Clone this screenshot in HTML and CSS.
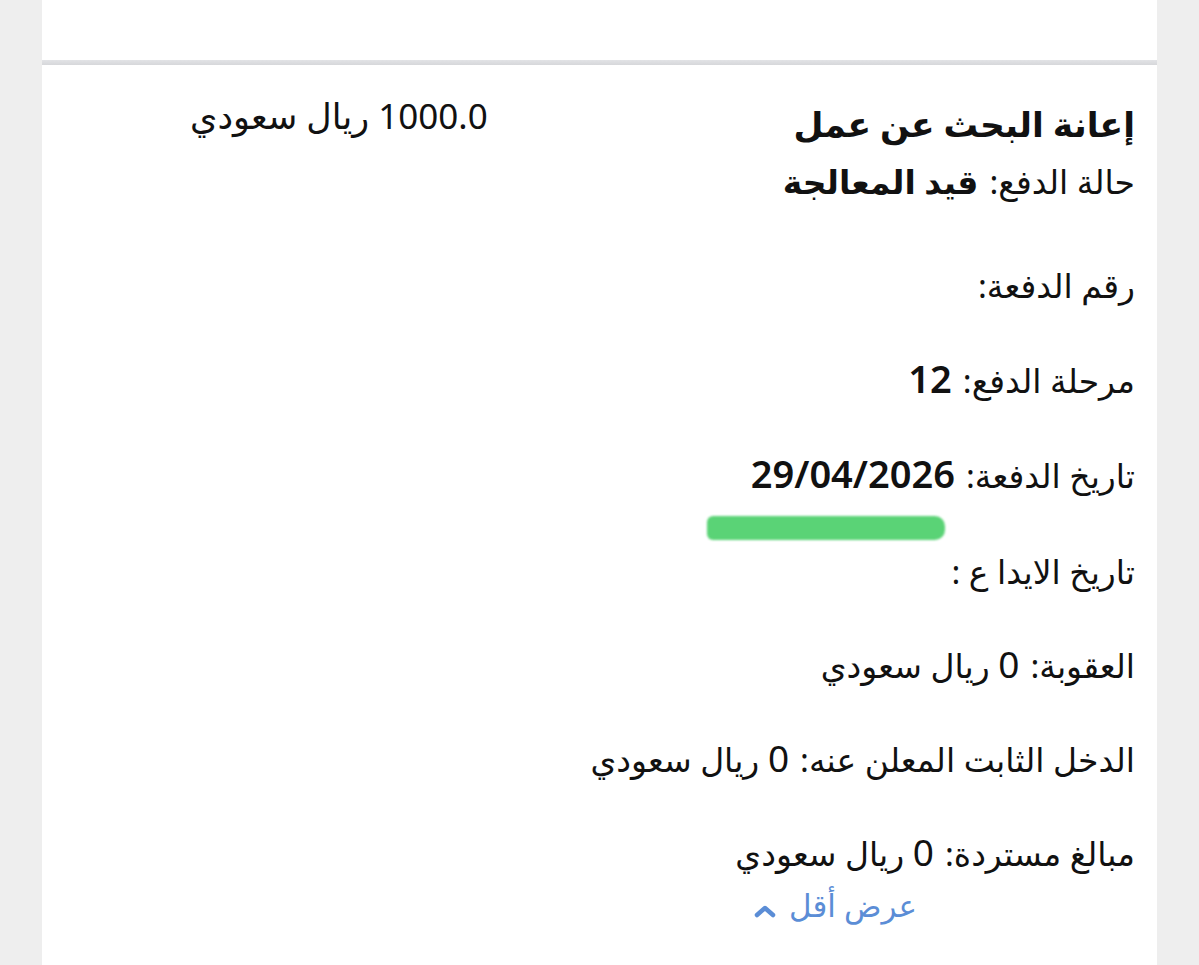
FILE: index.html
```html
<!DOCTYPE html>
<html lang="ar" dir="rtl">
<head>
<meta charset="utf-8">
<link rel="stylesheet" href="styles.css">
</head>
<body>
<div class="card">
  <div class="top-space"></div>
  <div class="divider"></div>
  <div class="content">
    <div class="head">
      <div class="title">إعانة البحث عن عمل</div>
      <div class="amount">1000.0 ريال سعودي</div>
    </div>
    <div class="row status"><span class="label">حالة الدفع:</span><b class="val">قيد المعالجة</b></div>
    <div class="rows">
      <div class="row"><span class="label">رقم الدفعة:</span></div>
      <div class="row"><span class="label">مرحلة الدفع:</span><b class="num val">12</b></div>
      <div class="row date"><span class="label">تاريخ الدفعة:</span><b class="num val">29/04/2026</b><span class="marker"></span></div>
      <div class="row deposit"><span class="label">تاريخ الايدا ع :</span></div>
      <div class="row"><span class="label">العقوبة:</span><span class="num val">0</span> ريال سعودي</div>
      <div class="row"><span class="label">الدخل الثابت المعلن عنه:</span><span class="num val">0</span> ريال سعودي</div>
      <div class="row"><span class="label">مبالغ مستردة:</span><span class="num val">0</span> ريال سعودي</div>
    </div>
    <div class="less">
      <span class="less-text">عرض أقل</span>
      <svg class="chev" width="24" height="14" viewBox="0 0 24 14"><path d="M4 11 L12 4 L20 11" fill="none" stroke="#5b8dd6" stroke-width="4.5" stroke-linecap="round" stroke-linejoin="round"/></svg>
    </div>
  </div>
</div>
</body>
</html>
```
FILE: styles.css
```css
html, body {
  margin: 0;
  padding: 0;
  background: #eeeeee;
}
body {
  font-family: "Noto Sans", "DejaVu Sans", sans-serif;
  color: #111;
}
.card {
  margin: 0 42px;
  background: #fff;
  min-height: 965px;
}
.top-space {
  height: 60px;
}
.divider {
  height: 5px;
  background: linear-gradient(#e2e3e6, #d6d7da);
}
.content {
  padding: 34px 22px 0 0;
}
.head {
  display: flex;
  align-items: flex-start;
}
.title {
  font-size: 34.5px;
  font-weight: bold;
  line-height: 50px;
  flex: 1;
}
.amount {
  font-size: 35px;
  line-height: 50px;
  margin-left: 148px;
  margin-top: -8px;
}
.row {
  font-size: 33px;
  line-height: 46px;
}
.val {
  margin-right: 11px;
}
.status {
  margin-top: 10px;
}
.rows {
  display: flex;
  flex-direction: column;
  gap: 46px;
  margin-top: 58px;
}
.num {
  font-family: "Noto Sans", sans-serif;
  font-size: 37px;
}
b.num {
  font-weight: 600;
  font-size: 38px;
}
.date {
  position: relative;
}
.deposit {
  margin-top: 4px;
}
.marker {
  position: absolute;
  top: 66px;
  right: 190px;
  width: 238px;
  height: 24px;
  border-radius: 6px 10px 10px 6px;
  background: #52d16f;
  filter: blur(1.2px);
  opacity: 0.95;
}
.less {
  display: flex;
  align-items: center;
  gap: 12px;
  margin-top: 8px;
  padding-right: 218px;
  color: #5b8dd6;
  font-size: 31px;
  line-height: 40px;
}
.chev {
  margin-top: 12px;
}
```
